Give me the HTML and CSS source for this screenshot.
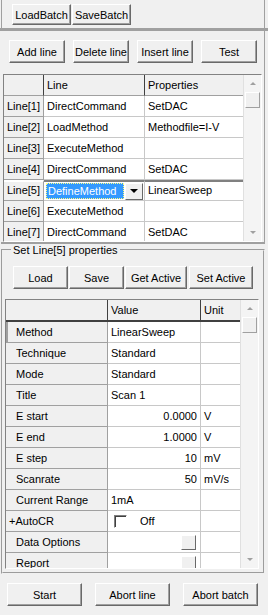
FILE: index.html
```html
<!DOCTYPE html>
<html lang="en">
<head>
    <meta charset="UTF-8">
    <meta name="viewport" content="width=device-width, initial-scale=1.0">
    <title>Batch Editor</title>
    <link rel="stylesheet" href="styles.css">
</head>
<body>
    <div class="batch-bar">
        <button class="btn batch-btn">LoadBatch</button>
        <button class="btn batch-btn">SaveBatch</button>
    </div>
    <div class="splitter"></div>

    <div class="edit-panel">
        <div class="line-tools">
            <button class="btn tool-btn">Add line</button>
            <button class="btn tool-btn">Delete line</button>
            <button class="btn tool-btn">Insert line</button>
            <button class="btn tool-btn">Test</button>
        </div>

        <div class="grid lines-grid">
            <div class="grid-rows">
                <div class="row head">
                    <div class="cell fixed"></div>
                    <div class="cell hcell">Line</div>
                    <div class="cell hcell">Properties</div>
                </div>
                <div class="row">
                    <div class="cell fixed">Line[1]</div>
                    <div class="cell">DirectCommand</div>
                    <div class="cell">SetDAC</div>
                </div>
                <div class="row">
                    <div class="cell fixed">Line[2]</div>
                    <div class="cell">LoadMethod</div>
                    <div class="cell">Methodfile=I-V</div>
                </div>
                <div class="row">
                    <div class="cell fixed">Line[3]</div>
                    <div class="cell">ExecuteMethod</div>
                    <div class="cell"></div>
                </div>
                <div class="row">
                    <div class="cell fixed">Line[4]</div>
                    <div class="cell">DirectCommand</div>
                    <div class="cell">SetDAC</div>
                </div>
                <div class="row current">
                    <div class="cell fixed">Line[5]</div>
                    <div class="cell combo-cell">
                        <span class="combo-text">DefineMethod</span>
                        <span class="combo-drop"><span class="tri down dark"></span></span>
                    </div>
                    <div class="cell">LinearSweep</div>
                </div>
                <div class="row">
                    <div class="cell fixed">Line[6]</div>
                    <div class="cell">ExecuteMethod</div>
                    <div class="cell"></div>
                </div>
                <div class="row">
                    <div class="cell fixed">Line[7]</div>
                    <div class="cell">DirectCommand</div>
                    <div class="cell">SetDAC</div>
                </div>
            </div>
            <div class="vscroll">
                <span class="sb-arrow"><span class="tri up"></span></span>
                <span class="thumb"></span>
                <span class="sb-track"></span>
                <span class="sb-arrow"><span class="tri down"></span></span>
            </div>
        </div>
    </div>

    <fieldset class="group">
        <legend>Set Line[5] properties</legend>
        <div class="prop-tools">
            <button class="btn prop-btn">Load</button>
            <button class="btn prop-btn">Save</button>
            <button class="btn prop-btn get">Get Active</button>
            <button class="btn prop-btn set">Set Active</button>
        </div>

        <div class="grid props-grid">
            <div class="grid-rows">
                <div class="row head">
                    <div class="cell fixed"></div>
                    <div class="cell hcell">Value</div>
                    <div class="cell hcell">Unit</div>
                </div>
                <div class="row">
                    <div class="cell fixed name focus">Method</div>
                    <div class="cell">LinearSweep</div>
                    <div class="cell"></div>
                </div>
                <div class="row">
                    <div class="cell fixed name">Technique</div>
                    <div class="cell">Standard</div>
                    <div class="cell"></div>
                </div>
                <div class="row">
                    <div class="cell fixed name">Mode</div>
                    <div class="cell">Standard</div>
                    <div class="cell"></div>
                </div>
                <div class="row">
                    <div class="cell fixed name">Title</div>
                    <div class="cell">Scan 1</div>
                    <div class="cell"></div>
                </div>
                <div class="row">
                    <div class="cell fixed name">E start</div>
                    <div class="cell num">0.0000</div>
                    <div class="cell">V</div>
                </div>
                <div class="row">
                    <div class="cell fixed name">E end</div>
                    <div class="cell num">1.0000</div>
                    <div class="cell">V</div>
                </div>
                <div class="row">
                    <div class="cell fixed name">E step</div>
                    <div class="cell num">10</div>
                    <div class="cell">mV</div>
                </div>
                <div class="row">
                    <div class="cell fixed name">Scanrate</div>
                    <div class="cell num">50</div>
                    <div class="cell">mV/s</div>
                </div>
                <div class="row">
                    <div class="cell fixed name">Current Range</div>
                    <div class="cell">1mA</div>
                    <div class="cell"></div>
                </div>
                <div class="row">
                    <div class="cell fixed">+AutoCR</div>
                    <div class="cell check-cell"><span class="checkbox"></span>Off</div>
                    <div class="cell"></div>
                </div>
                <div class="row">
                    <div class="cell fixed name">Data Options</div>
                    <div class="cell btn-cell"><span class="ellipsis"></span></div>
                    <div class="cell"></div>
                </div>
                <div class="row">
                    <div class="cell fixed name">Report</div>
                    <div class="cell btn-cell"><span class="ellipsis"></span></div>
                    <div class="cell"></div>
                </div>
            </div>
            <div class="vscroll">
                <span class="sb-arrow"><span class="tri up"></span></span>
                <span class="thumb"></span>
                <span class="sb-track"></span>
                <span class="sb-arrow"><span class="tri down"></span></span>
            </div>
        </div>
    </fieldset>

    <div class="run-bar">
        <button class="btn run-btn">Start</button>
        <button class="btn run-btn">Abort line</button>
        <button class="btn run-btn">Abort batch</button>
    </div>
</body>
</html>
```

FILE: styles.css
```css
body {
    margin: 0;
    width: 268px;
    height: 615px;
    overflow: hidden;
    background: #f0f0f0;
    font-family: "Liberation Sans", Arial, sans-serif;
    font-size: 11px;
    color: #000;
}
.btn {
    box-sizing: border-box;
    height: 23px;
    padding: 0;
    background: #f0f0f0;
    font-family: inherit;
    font-size: 11px;
    color: #000;
    white-space: nowrap;
    border: 1px solid;
    border-color: #fff #696969 #696969 #fff;
    box-shadow: inset -1px -1px #a0a0a0;
}

/* batch load/save strip */
.batch-bar {
    box-sizing: border-box;
    height: 28px;
    margin: 0 3px 0 1px;
    border-left: 1px solid #a0a0a0;
    border-right: 1px solid #a0a0a0;
    padding: 4px 0 0 10px;
    display: flex;
    gap: 1px;
}
.batch-btn {
    width: 59px;
    height: 21px;
}
.splitter {
    height: 3px;
    background: #a0a0a0;
}

/* line editor */
.edit-panel {
    box-sizing: border-box;
    height: 213px;
    margin: 0 3px 0 1px;
    border-right: 1px solid #a0a0a0;
    border-bottom: 2px solid #a0a0a0;
}
.line-tools {
    display: flex;
    gap: 8px;
    padding: 9px 0 0 8px;
}
.tool-btn {
    width: 56px;
}

.grid {
    box-sizing: border-box;
    display: flex;
    background: #fff;
    border: 1px solid #828282;
    border-right-color: #fff;
    border-bottom-color: #fff;
    overflow: hidden;
}
.grid-rows {
    flex: 1;
    overflow: hidden;
}
.row {
    display: grid;
    height: 21px;
}
.cell {
    box-sizing: border-box;
    height: 21px;
    line-height: 20px;
    padding: 0 3px;
    white-space: nowrap;
    overflow: hidden;
    border-right: 1px solid #c8c8c8;
    border-bottom: 1px solid #c8c8c8;
}
.cell.fixed {
    background: #f0f0f0;
    border-right-color: #a0a0a0;
    border-bottom-color: #a0a0a0;
}
.row.head .cell {
    background: #f0f0f0;
    border-right: 1px solid #404040;
    border-bottom: 1px solid #a0a0a0;
}

.lines-grid {
    height: 168px;
    margin: 11px 0 0 2px;
    width: 259px;
}
.lines-grid .row {
    grid-template-columns: 40px 101px 100px;
}
.lines-grid .row.current .cell {
    border-top: 2px solid #808080;
    line-height: 17px;
}
.lines-grid .row.current .cell.fixed {
    border-top-color: #fff;
}
.combo-cell {
    display: flex;
    align-items: center;
    padding: 0 1px 0 2px;
    gap: 1px;
}
.combo-text {
    flex: 1;
    height: 16px;
    line-height: 16px;
    padding: 0 2px;
    background: #3399ff;
    color: #fff;
    outline: 1px dotted #ffff80;
    outline-offset: -1px;
}
.combo-drop {
    box-sizing: border-box;
    width: 18px;
    height: 17px;
    display: flex;
    align-items: center;
    justify-content: center;
    background: #f0f0f0;
    border: 1px solid;
    border-color: #fff #696969 #696969 #fff;
}

.vscroll {
    width: 17px;
    display: flex;
    flex-direction: column;
    background: #f4f4f4;
    border-left: 1px solid #e0e0e0;
}
.sb-arrow {
    height: 17px;
    display: flex;
    align-items: center;
    justify-content: center;
}
.sb-track {
    flex: 1;
}
.thumb {
    box-sizing: border-box;
    height: 16px;
    margin: 0 1px;
    background: #f0f0f0;
    border: 1px solid;
    border-color: #fff #a0a0a0 #a0a0a0 #fff;
}
.tri {
    width: 0;
    height: 0;
    border-left: 3px solid transparent;
    border-right: 3px solid transparent;
}
.tri.up {
    border-bottom: 3px solid #a0a0a0;
}
.tri.down {
    border-top: 3px solid #a0a0a0;
}
.tri.dark {
    border-left-width: 4px;
    border-right-width: 4px;
    border-top: 4px solid #000;
}

/* properties group */
.group {
    box-sizing: border-box;
    height: 330px;
    margin: 0 3px 0 1px;
    padding: 0;
    border: 2px groove #f0f0f0;
}
.group legend {
    margin-left: 8px;
    padding: 0 2px;
}
.prop-tools {
    display: flex;
    gap: 1px;
    padding: 10px 0 0 10px;
}
.prop-btn {
    width: 55px;
}
.prop-btn.get {
    width: 62px;
}
.prop-btn.set {
    width: 64px;
    margin-left: 1px;
}
.props-grid {
    height: 270px;
    width: 254px;
    margin: 10px 0 0 2px;
}
.props-grid .row {
    grid-template-columns: 102px 93px 41px;
}
.props-grid .row.head .cell {
    height: 22px;
    border-bottom: 2px solid #404040;
}
.props-grid .row.head {
    height: 22px;
}
.props-grid .name {
    padding-left: 10px;
}
.props-grid .focus {
    box-shadow: inset 2px 0 #a0a0a0;
}
.cell.num {
    text-align: right;
}
.check-cell {
    display: flex;
    align-items: center;
    gap: 13px;
    padding-left: 6px;
}
.checkbox {
    box-sizing: border-box;
    width: 13px;
    height: 13px;
    background: #fff;
    border: 1px solid;
    border-color: #808080 #fff #fff #808080;
    box-shadow: inset 1px 1px #404040;
}
.btn-cell {
    display: flex;
    justify-content: flex-end;
    align-items: center;
    padding-right: 4px;
}
.ellipsis {
    box-sizing: border-box;
    width: 15px;
    height: 15px;
    background: #f0f0f0;
    border: 1px solid;
    border-color: #fff #696969 #696969 #fff;
}

/* run controls */
.run-bar {
    display: flex;
    gap: 13px;
    padding: 9px 0 0 7px;
}
.run-btn {
    width: 75px;
}
```
